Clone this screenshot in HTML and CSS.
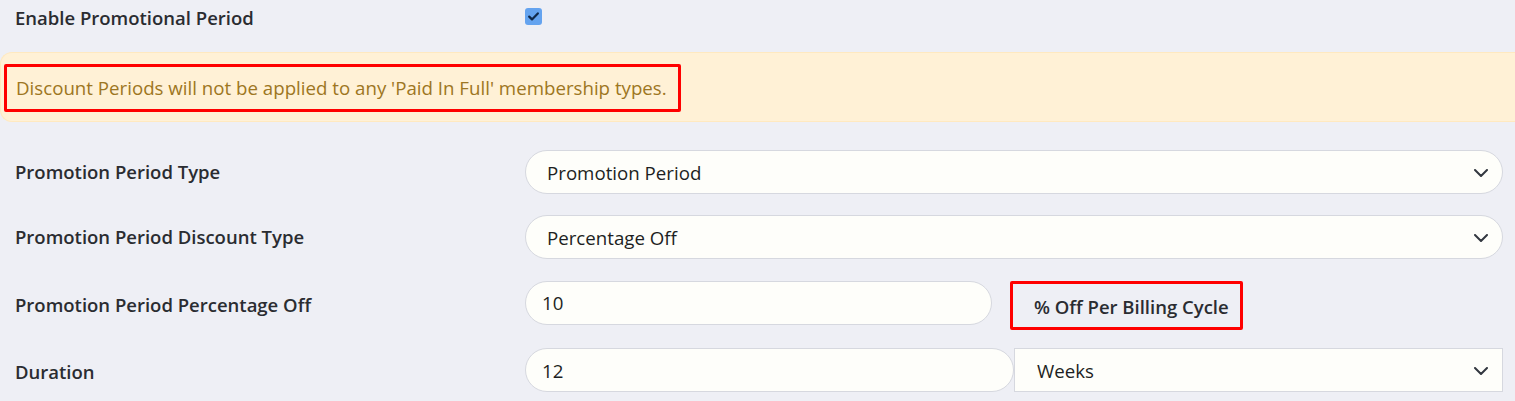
FILE: index.html
```html
<!DOCTYPE html>
<html lang="en">
<head>
<meta charset="utf-8">
<title>Promotional Period</title>
<link rel="stylesheet" href="styles.css">
</head>
<body>
<div class="form">
  <div class="row row-check">
    <div class="label">Enable Promotional Period</div>
    <div class="control">
      <span class="checkbox">
        <svg width="11" height="9" viewBox="0 0 11 9"><path d="M1.2 4.6 L4 7.4 L9.8 1.4" fill="none" stroke="#10294a" stroke-width="2.2" stroke-linecap="round" stroke-linejoin="round"/></svg>
      </span>
    </div>
  </div>

  <div class="alert">
    <div class="highlight alert-text">Discount Periods will not be applied to any 'Paid In Full' membership types.</div>
  </div>

  <div class="row row-field first">
    <div class="label">Promotion Period Type</div>
    <div class="control">
      <div class="select pill">
        <span>Promotion Period</span>
        <svg class="chev" width="14" height="8" viewBox="0 0 14 8"><path d="M1 1 L7 7 L13 1" fill="none" stroke="#333840" stroke-width="2" stroke-linecap="round" stroke-linejoin="round"/></svg>
      </div>
    </div>
  </div>

  <div class="row row-field">
    <div class="label">Promotion Period Discount Type</div>
    <div class="control">
      <div class="select pill">
        <span>Percentage Off</span>
        <svg class="chev" width="14" height="8" viewBox="0 0 14 8"><path d="M1 1 L7 7 L13 1" fill="none" stroke="#333840" stroke-width="2" stroke-linecap="round" stroke-linejoin="round"/></svg>
      </div>
    </div>
  </div>

  <div class="row row-field third">
    <div class="label">Promotion Period Percentage Off</div>
    <div class="control control-pct">
      <div class="input pill pct-input">10</div>
      <div class="highlight suffix">% Off Per Billing Cycle</div>
    </div>
  </div>

  <div class="row row-field fourth">
    <div class="label label-low">Duration</div>
    <div class="control control-dur">
      <div class="input pill-left dur-input">12</div>
      <div class="select square dur-select">
        <span>Weeks</span>
        <svg class="chev" width="14" height="8" viewBox="0 0 14 8"><path d="M1 1 L7 7 L13 1" fill="none" stroke="#333840" stroke-width="2" stroke-linecap="round" stroke-linejoin="round"/></svg>
      </div>
    </div>
  </div>
</div>
</body>
</html>
```

FILE: styles.css
```css
* { box-sizing: border-box; }

html, body {
  margin: 0;
  padding: 0;
  background: #eeeff5;
}

body {
  font-family: "Open Sans", "Noto Sans", Arial, sans-serif;
  font-size: 18.7px;
  color: #26282d;
}

.form {
  width: 1515px;
  padding-right: 12px;
}

.row {
  display: flex;
  align-items: center;
}

.label {
  width: 525px;
  flex: none;
  padding-left: 15px;
  font-size: 18.5px;
  font-weight: 600;
  color: #2a2c31;
  line-height: 24px;
}

.control {
  flex: 1;
  display: flex;
  align-items: center;
}

.row-check {
  height: 36px;
}

.checkbox {
  width: 17px;
  height: 17px;
  margin-top: -3px;
  border-radius: 3px;
  background: #64a3ef;
  display: flex;
  align-items: center;
  justify-content: center;
}

.alert {
  margin-top: 16px;
  margin-right: -12px;
  height: 70px;
  background: #fff1d6;
  border: 1px solid #ffe9c0;
  border-right: none;
  border-radius: 12px 0 0 12px;
  padding: 11px 0 0 3px;
}

.highlight {
  border: 3px solid #ff0000;
  border-radius: 2px;
}

.alert-text {
  display: inline-block;
  color: #9d7622;
  padding: 9px 11px 9px 9px;
  line-height: 24px;
}

.row-field {
  height: 44px;
  margin-top: 21px;
}

.row-field.first {
  margin-top: 28px;
}

.row-field.third {
  margin-top: 24px;
}

.row-field.fourth {
  margin-top: 21px;
}

.select, .input {
  height: 44px;
  background: #fefefa;
  border: 1px solid #d6d8df;
  display: flex;
  align-items: center;
  color: #1d1f22;
  padding-left: 21px;
}

.select {
  justify-content: space-between;
  padding-right: 14px;
}

.pill {
  border-radius: 22px;
}

.pill-left {
  border-radius: 22px;
}

.square {
  border-radius: 0;
}

.control > .pill.select {
  width: 978px;
}

.chev {
  margin-top: 1px;
}

.control-pct {
  align-items: flex-start;
}

.pct-input {
  width: 467px;
  padding-left: 16px;
}

.suffix {
  margin-left: 18px;
  height: 49px;
  width: 233px;
  padding-left: 21px;
  display: flex;
  align-items: center;
  padding-top: 3px;
  font-size: 18.5px;
  font-weight: 600;
  color: #2a2c31;
  white-space: nowrap;
}

.control-dur .dur-input {
  width: 489px;
  padding-left: 16px;
}

.control-dur .dur-select {
  width: 489px;
  padding-left: 22px;
}

.label-low {
  padding-top: 4px;
}
```
